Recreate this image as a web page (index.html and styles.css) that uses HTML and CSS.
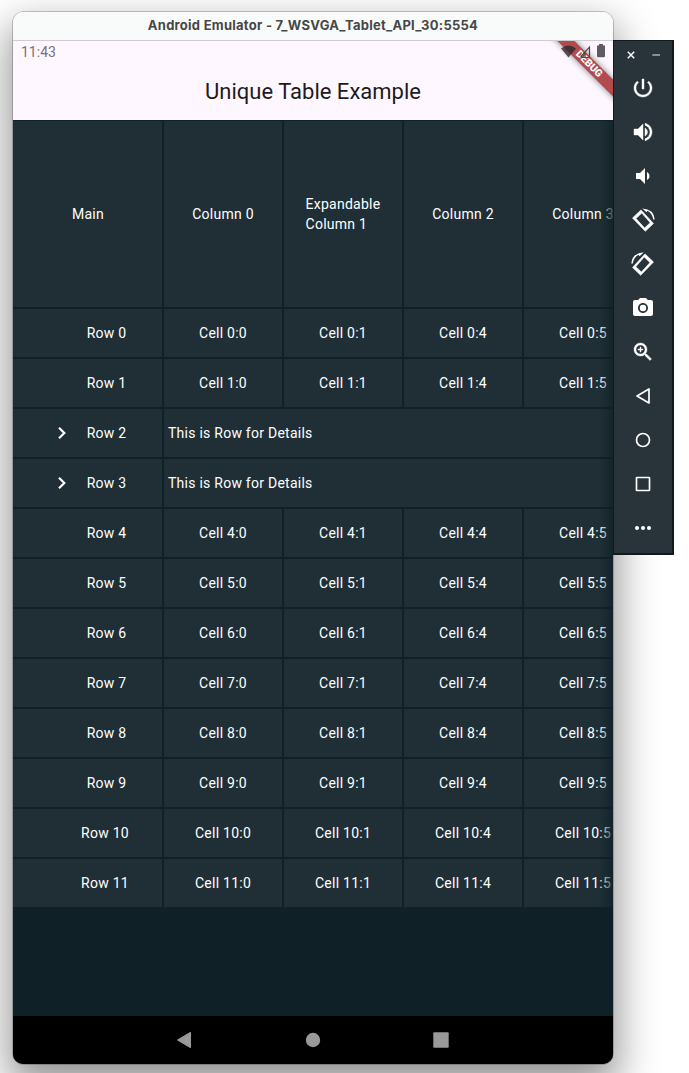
FILE: index.html
```
<!DOCTYPE html>
<html lang="en">
<head>
<meta charset="utf-8">
<title>Android Emulator</title>
<link rel="stylesheet" href="styles.css">
</head>
<body>
<main class="desktop">
  <section class="window">
    <header class="titlebar">Android Emulator - 7_WSVGA_Tablet_API_30:5554</header>
    <div class="screen">
      <div class="appbar">
        <div class="status"><span>11:43</span></div>
        <h1 class="title">Unique Table Example</h1>
        <div class="ribbon-box"><div class="ribbon">DEBUG</div></div>
        <svg class="status-icons" width="54" height="60" viewBox="0 0 54 60">
          <path d="M2 7.500Q9.500 1.500 17 7.500L9.500 16.500Z" fill="#30282c" opacity=".8"/><path d="M22 15.500L30.500 6V16.500H23Z" fill="none" stroke="#4f474c" stroke-width="1.200"/><path d="M22 16.500L27 9.500V16.500Z" fill="#4f474c" opacity=".7"/><path d="M38 4.500h2V3h4v1.500h2V15q0 1.200-1.200 1.200h-5.600q-1.200 0-1.200-1.200z" fill="#5f5b62"/>
        </svg>
      </div>
      <div class="table">
        <div class="row head"><div class="main">Main</div><div class="cell">Column 0</div><div class="cell"><span>Expandable<br>Column 1</span></div><div class="cell">Column 2</div><div class="cell">Column 3</div></div>
        <div class="row"><div class="main label">Row 0</div><div class="cell">Cell 0:0</div><div class="cell">Cell 0:1</div><div class="cell">Cell 0:4</div><div class="cell">Cell 0:5</div></div>
        <div class="row"><div class="main label">Row 1</div><div class="cell">Cell 1:0</div><div class="cell">Cell 1:1</div><div class="cell">Cell 1:4</div><div class="cell">Cell 1:5</div></div>
        <div class="row"><div class="main label"><svg class="chevron" width="24" height="24" viewBox="0 0 24 24"><path d="M9 6.700L14.300 12L9 17.300" fill="none" stroke="#fff" stroke-width="2.200"/></svg>Row 2</div><div class="details">This is Row for Details</div></div>
        <div class="row"><div class="main label"><svg class="chevron" width="24" height="24" viewBox="0 0 24 24"><path d="M9 6.700L14.300 12L9 17.300" fill="none" stroke="#fff" stroke-width="2.200"/></svg>Row 3</div><div class="details">This is Row for Details</div></div>
        <div class="row"><div class="main label">Row 4</div><div class="cell">Cell 4:0</div><div class="cell">Cell 4:1</div><div class="cell">Cell 4:4</div><div class="cell">Cell 4:5</div></div>
        <div class="row"><div class="main label">Row 5</div><div class="cell">Cell 5:0</div><div class="cell">Cell 5:1</div><div class="cell">Cell 5:4</div><div class="cell">Cell 5:5</div></div>
        <div class="row"><div class="main label">Row 6</div><div class="cell">Cell 6:0</div><div class="cell">Cell 6:1</div><div class="cell">Cell 6:4</div><div class="cell">Cell 6:5</div></div>
        <div class="row"><div class="main label">Row 7</div><div class="cell">Cell 7:0</div><div class="cell">Cell 7:1</div><div class="cell">Cell 7:4</div><div class="cell">Cell 7:5</div></div>
        <div class="row"><div class="main label">Row 8</div><div class="cell">Cell 8:0</div><div class="cell">Cell 8:1</div><div class="cell">Cell 8:4</div><div class="cell">Cell 8:5</div></div>
        <div class="row"><div class="main label">Row 9</div><div class="cell">Cell 9:0</div><div class="cell">Cell 9:1</div><div class="cell">Cell 9:4</div><div class="cell">Cell 9:5</div></div>
        <div class="row"><div class="main label wide">Row 10</div><div class="cell">Cell 10:0</div><div class="cell">Cell 10:1</div><div class="cell">Cell 10:4</div><div class="cell">Cell 10:5</div></div>
        <div class="row"><div class="main label wide">Row 11</div><div class="cell">Cell 11:0</div><div class="cell">Cell 11:1</div><div class="cell">Cell 11:4</div><div class="cell">Cell 11:5</div></div>
        <div class="fade"></div>
      </div>
      <nav class="navbar">
        <svg width="16" height="18" viewBox="0 0 16 18"><path d="M.5 9L13.500 1.300V16.700Z" fill="#999" stroke="#999" stroke-linejoin="round"/></svg>
        <svg width="16" height="18" viewBox="0 0 16 18"><circle cx="8" cy="9" r="7.200" fill="#999"/></svg>
        <svg width="16" height="18" viewBox="0 0 16 18"><rect x=".3" y="1.300" width="15.400" height="15.400" rx="1" fill="#999"/></svg>
      </nav>
    </div>
  </section>
  <aside class="toolbar">
    <div class="controls">
      <svg width="10" height="10" viewBox="0 0 10 10"><path d="M1.800 1.800L8.200 8.200M8.200 1.800L1.800 8.200" stroke="#fff" stroke-width="1.500"/></svg>
      <svg width="10" height="10" viewBox="0 0 10 10"><path d="M1.300 5H9" stroke="#a9afb2" stroke-width="1.500"/></svg>
    </div>
    <div class="tools">
      <svg class="bold" viewBox="0 0 24 24"><path d="M13 3h-2v10h2V3zm4.830 2.170l-1.420 1.420C17.990 7.860 19 9.810 19 12c0 3.870-3.130 7-7 7s-7-3.130-7-7c0-2.190 1.010-4.140 2.580-5.420L6.170 5.170C4.230 6.820 3 9.260 3 12c0 4.970 4.030 9 9 9s9-4.030 9-9c0-2.740-1.230-5.180-3.170-6.830z"/></svg>
      <svg class="bold" viewBox="0 0 24 24"><path d="M3 9v6h4l5 5V4L7 9H3zm13.500 3c0-1.770-1.020-3.290-2.500-4.030v8.050c1.480-.730 2.500-2.250 2.500-4.020zM14 3.230v2.060c2.890.860 5 3.540 5 6.710s-2.110 5.850-5 6.710v2.060c4.010-.910 7-4.490 7-8.770s-2.990-7.860-7-8.770z"/></svg>
      <svg viewBox="0 0 24 24"><path d="M18.500 12c0-1.770-1.020-3.290-2.500-4.030v8.050c1.480-.730 2.500-2.250 2.500-4.020zM5 9v6h4l5 5V4L9 9H5z"/></svg>
      <svg viewBox="0 0 24 24"><g id="rotate"><path stroke="#fff" stroke-width=".6" stroke-linejoin="round" fill-rule="evenodd" d="M10 1.900L1.500 10L14.300 23.300L22.500 15.500ZM10.800 5L19.200 14.700L13.600 20L5 10.600Z"/><path d="M11.300 .4L15.500 4.300L16.500 2.700Q21.200 5.300 22.200 11.500H23.700Q22.800 1 11.300 .4Z"/></g></svg>
      <svg viewBox="0 0 24 24"><use href="#rotate" transform="matrix(-1 0 0 1 24 0)"/></svg>
      <svg viewBox="0 0 24 24"><path fill-rule="evenodd" d="M9 2L7.170 4H4c-1.100 0-2 .9-2 2v12c0 1.100.9 2 2 2h16c1.100 0 2-.9 2-2V6c0-1.100-.9-2-2-2h-3.170L15 2H9zm3 15c-2.760 0-5-2.240-5-5s2.240-5 5-5 5 2.240 5 5-2.240 5-5 5z"/><circle cx="12" cy="12" r="3.200"/></svg>
      <svg class="bold" viewBox="0 0 24 24"><path d="M15.500 14h-.790l-.280-.270C15.410 12.590 16 11.110 16 9.500 16 5.910 13.090 3 9.500 3S3 5.910 3 9.500 5.910 16 9.500 16c1.610 0 3.090-.590 4.230-1.570l.270.280v.790l5 4.990L20.490 19l-4.990-5zm-6 0C7.010 14 5 11.990 5 9.500S7.010 5 9.500 5 14 7.010 14 9.500 11.990 14 9.500 14zM12 10h-2v2H9v-2H7V9h2V7h1v2h2v1z"/></svg>
      <svg class="line" viewBox="0 0 24 24"><path d="M6 12L18 5V19Z"/></svg>
      <svg class="line" viewBox="0 0 24 24"><circle cx="12" cy="12" r="6.500"/></svg>
      <svg class="line" viewBox="0 0 24 24"><rect x="5.500" y="5.500" width="13" height="13" rx=".5"/></svg>
      <svg viewBox="0 0 24 24"><circle cx="6" cy="12" r="2"/><circle cx="12" cy="12" r="2"/><circle cx="18" cy="12" r="2"/></svg>
    </div>
  </aside>
</main>
</body>
</html>
```
FILE: styles.css
```
* { box-sizing: border-box; }
body { margin: 0; background: #fff; font-family: Roboto, sans-serif; }
.desktop { display: flex; align-items: flex-start; height: 1073px; padding: 12px 0 0 13px; overflow: hidden; }
.window { display: flex; flex-direction: column; width: 600px; height: 1052px; flex: none; border-radius: 11px; box-shadow: 0 0 0 1px rgba(0,0,0,.2), 0 18px 40px 5px rgba(0,0,0,.42); }
.titlebar { height: 29px; flex: none; border-bottom: 1px solid #cfccd4; border-radius: 10px 10px 0 0; background: #f9fbfb; color: #464747; font: bold 13px/27px Inter, sans-serif; letter-spacing: .26px; text-align: center; }
.screen { display: flex; flex-direction: column; flex: 1; overflow: hidden; border-radius: 0 0 10px 10px; background: #0f2127; }
.appbar { position: relative; height: 79px; flex: none; overflow: hidden; background: #fef7ff; }
.status { height: 24px; padding-left: 8px; color: #77727a; font-size: 14px; line-height: 23px; }
.title { margin: 0; color: #1d1b20; font-size: 22px; font-weight: 400; line-height: 53px; text-align: center; }
.status-icons { position: absolute; top: 0; right: 0; }
.ribbon-box { position: absolute; top: 0; right: 0; width: 80px; height: 79px; overflow: hidden; }
.ribbon { position: absolute; top: 17px; right: -31px; width: 110px; height: 12px; background: #b34a4d; box-shadow: 0 0 6px rgba(0,0,0,.5); color: #fff; font-size: 10.200px; font-weight: 900; line-height: 12px; text-align: center; transform: rotate(45deg); }
.table { position: relative; height: 896px; flex: none; padding-top: 1px; overflow: hidden; color: #fff; font-size: 14px; line-height: 20px; letter-spacing: .25px; }
.row { display: grid; grid-template-columns: 149px repeat(4, 118px); column-gap: 2px; width: 629px; height: 48px; margin-bottom: 2px; }
.head { height: 186px; }
.head .main { padding-left: 1px; }
.main, .cell, .details { display: flex; align-items: center; justify-content: center; background: #202f36; }
.main.label { position: relative; padding-left: 38px; }
.main.wide { padding-left: 35px; }
.details { grid-column: 2 / -1; justify-content: flex-start; padding-left: 4px; }
.chevron { position: absolute; left: 37px; top: 12px; }
.fade { position: absolute; top: 0; right: 0; width: 14px; height: 787px; background: linear-gradient(90deg, rgba(15,33,39,0), rgba(15,33,39,.8)); }
.navbar { display: flex; justify-content: center; align-items: center; gap: 112px; height: 48px; flex: none; background: #000; }
.toolbar { width: 61px; height: 515px; flex: none; margin-top: 28px; border: 1px solid #12191c; border-right-width: 2px; border-bottom-width: 2px; background: #29333a; z-index: 1; }
.controls { display: flex; justify-content: center; gap: 15px; height: 25px; padding: 9px 0 0; }
.tools { display: flex; flex-direction: column; align-items: center; gap: 20px; padding-top: 10px; }
.tools svg { width: 24px; height: 24px; fill: #fff; }
.tools .bold { stroke: #fff; stroke-width: .4; }
.tools .line { fill: none; stroke: #fff; stroke-width: 1.700; stroke-linejoin: round; }
```
